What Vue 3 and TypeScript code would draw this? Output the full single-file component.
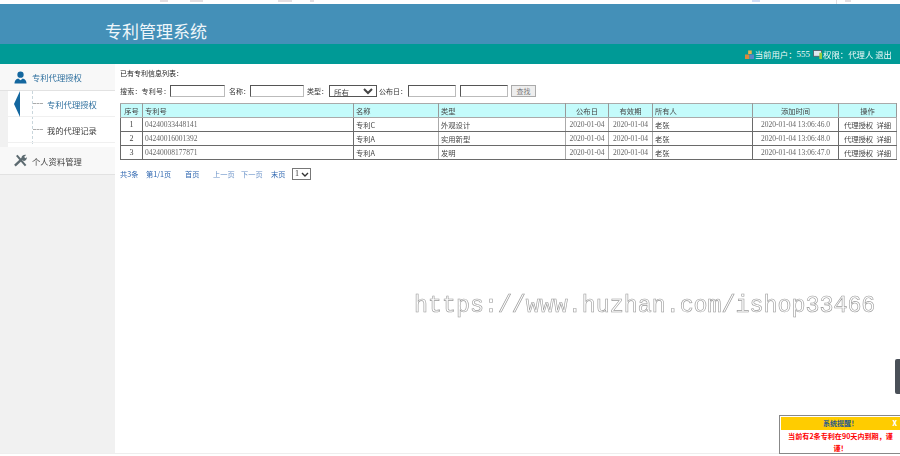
<script setup lang="ts">
interface Row { no: number; code: string; name: string; kind: string; pub: string; exp: string; owner: string; added: string }
const rows: Row[] = [
  { no: 1, code: '04240033448141', name: '专利C', kind: '外观设计', pub: '2020-01-04', exp: '2020-01-04', owner: '老张', added: '2020-01-04 13:06:46.0' },
  { no: 2, code: '04240016001392', name: '专利A', kind: '实用新型', pub: '2020-01-04', exp: '2020-01-04', owner: '老张', added: '2020-01-04 13:06:48.0' },
  { no: 3, code: '04240008177871', name: '专利A', kind: '发明', pub: '2020-01-04', exp: '2020-01-04', owner: '老张', added: '2020-01-04 13:06:47.0' },
]
</script>

<template>
  <div class="page">
    <div class="topstrip">
      <i class="m1"></i><i class="m2"></i><i class="m3"></i><i class="m4"></i><i class="m5"></i><i class="m6"></i><i class="m7"></i>
    </div>
    <header class="banner"><h1>专利管理系统</h1></header>
    <div class="statusbar">
      <svg class="sicon" viewBox="0 0 10 10"><rect x="3.500" y="0.500" width="4" height="4" fill="#e8b04a"/><rect x="0" y="5" width="5" height="5" fill="#d98a3a"/><rect x="5" y="5" width="5" height="5" fill="#5a86c4"/></svg>
      <span>当前用户：</span><span class="n555">555</span>
      <svg class="sicon s2" viewBox="0 0 10 10"><rect x="0.500" y="0.500" width="9" height="6.500" fill="#dfe8ee" stroke="#50606c" stroke-width="1"/><rect x="7" y="3" width="3" height="7" fill="#9c4"/></svg>
      <span>权限：代理人 退出</span>
    </div>
    <div class="body">
      <aside class="side">
        <div class="group active-group">
          <svg class="gicon" viewBox="0 0 14 14"><circle cx="7" cy="4" r="3.400" fill="#14679f"/><path d="M0.500 13.500c0-2.500 1-4.500 4-5.500l2.500 2 2.500-2c3 1 4 3 4 5.500z" fill="#14679f"/></svg>
          <span>专利代理授权</span>
        </div>
        <div class="submenu">
          <div class="subitem current"><span class="arrow"></span><i class="dash"></i><span>专利代理授权</span></div>
          <div class="subitem"><i class="dash"></i><span>我的代理记录</span></div>
        </div>
        <div class="group second-group">
          <svg class="gicon" viewBox="0 0 14 14"><path d="M3 1.500l9.500 11" stroke="#5c6a70" stroke-width="2.200" fill="none"/><path d="M1 12.500L9 5" stroke="#5c6a70" stroke-width="2.600" fill="none"/><path d="M8 4.500c0-2 2-4 5-3.500l-2 2 1 1.500 1.800-1c.4 2.500-2 4.500-4 3.800z" fill="#5c6a70"/></svg>
          <span>个人资料管理</span>
        </div>
      </aside>
      <main class="main">
        <div class="caption">已有专利信息列表：</div>
        <form class="search" @submit.prevent>
          <span class="l-code">搜索：专利号：</span><input class="i-code" />
          <span class="l-name">名称：</span><input class="i-name" />
          <span class="l-kind">类型：</span><select class="kind"><option>所有</option></select>
          <span class="l-pub">公布日：</span><input class="i-date" /><input class="i-date second" />
          <button class="go">查找</button>
        </form>
        <table class="grid">
          <colgroup>
            <col class="c1" /><col class="c2" /><col class="c3" /><col class="c4" />
            <col class="c5" /><col class="c6" /><col class="c7" /><col class="c8" /><col class="c9" />
          </colgroup>
          <thead>
            <tr>
              <th class="c">序号</th><th>专利号</th><th>名称</th><th>类型</th><th class="c">公布日</th><th class="c">有效期</th><th>所有人</th><th class="c">添加时间</th><th class="c">操作</th>
            </tr>
          </thead>
          <tbody>
            <tr v-for="r in rows" :key="r.no">
              <td class="c no">{{ r.no }}</td>
              <td class="num">{{ r.code }}</td>
              <td class="soft">{{ r.name }}</td>
              <td class="soft">{{ r.kind }}</td>
              <td class="c num soft">{{ r.pub }}</td>
              <td class="c num soft">{{ r.exp }}</td>
              <td>{{ r.owner }}</td>
              <td class="c num">{{ r.added }}</td>
              <td class="c soft">代理授权&nbsp;&nbsp;详细</td>
            </tr>
          </tbody>
        </table>
        <div class="pager">
          <span class="p1">共3条</span><span class="p2">第1/1页</span><span class="p3">首页</span><span class="p4 dim">上一页</span><span class="p5 dim">下一页</span><span class="p6">末页</span>
          <select class="pagesel"><option>1</option></select>
        </div>
      </main>
    </div>
    <div class="watermark">https://www.huzhan.com/ishop33466</div>
    <div class="edge"></div>
    <div class="notice">
      <div class="notice-head"><span>系统提醒！</span><b>X</b></div>
      <div class="notice-body">当前有2条专利在90天内到期，谨谨！</div>
    </div>
  </div>
</template>

<style>
html, body { margin: 0; background: #fff; overflow: hidden; }
</style>

<style scoped>
.page { position: relative; width: 900px; height: 456px; overflow: hidden; box-sizing: border-box; font-family: "Noto Sans CJK SC", sans-serif; font-size: 7px; color: #333; filter: blur(0.3px); }
.topstrip { height: 4px; display: flex; }
.topstrip i { height: 2px; background: #e4dee1; display: block; }
.m1 { width: 8px; margin-left: 160px; }
.m2 { width: 13px; margin-left: 22px; }
.m3 { width: 14px; margin-left: 75px; }
.m4 { width: 4px; margin-left: 18px; }
.m5 { width: 8px; margin-left: 438px; background: #d2def6 !important; }
.m6 { width: 1px; margin-left: 76px; height: 4px !important; }
.m7 { width: 6px; margin-left: 8px; }
.banner { height: 40px; background: #4490b8; box-sizing: border-box; padding: 16px 0 0 105px; }
.banner h1 { margin: 0; font-size: 17px; line-height: 22px; font-weight: 400; color: #eef6fa; }
.statusbar { height: 20px; background: #009a96; color: #f2fbfa; display: flex; justify-content: flex-end; align-items: center; padding-right: 8px; font-size: 8.400px; }
.sicon { width: 9px; height: 9px; margin-right: 1px; }
.n555 { font-family: "Liberation Serif", serif; font-size: 9px; }
.s2 { margin-left: 3px; }
.body { display: flex; height: 389px; border-bottom: 1px solid #eee; }
.side { width: 115px; flex: none; background: #f1f1f1; }
.group { height: 26px; background: #f8f8f8; border-bottom: 1px solid #e2e2e2; display: flex; align-items: center; gap: 5px; padding-left: 14px; font-size: 8.300px; color: #444; }
.second-group { height: 27px; }
.active-group { color: #2e6f9e; }
.gicon { width: 13px; height: 13px; flex: none; }
.submenu { background: #fff; margin-left: 8px; height: 56px; position: relative; }
.submenu::before { content: ""; position: absolute; left: 24px; top: 0; bottom: 3px; border-left: 1px dashed #c9d6dc; }
.subitem { height: 25px; display: flex; align-items: center; border-bottom: 1px solid #f0f0f0; padding-left: 25px; font-size: 8.300px; color: #444; position: relative; }
.subitem.current { color: #2e6f9e; }
.dash { width: 10px; border-top: 1px dashed #aaa; margin-right: 4px; }
.arrow { position: absolute; left: 6px; top: 0; width: 0; height: 0; border-top: 13px solid transparent; border-bottom: 13px solid transparent; border-right: 6px solid #14679f; }
.main { flex: 1; padding: 4px 4px 0 5px; min-width: 0; }
.caption { line-height: 10px; height: 10px; color: #222; }
.search { display: flex; align-items: center; height: 14px; margin-top: 6px; color: #333; white-space: nowrap; }
.search input { box-sizing: border-box; border: 1px solid #666; border-color: #555 #bbb #bbb #555; padding: 0; margin: 0; background: #fff; height: 12px; flex: none; }
.l-code { width: 49px; letter-spacing: 0.200px; }
.i-code { width: 55px; margin-left: 1px !important; }
.l-name { margin-left: 4px; width: 21px; }
.i-name { width: 54px; }
.l-kind { margin-left: 3px; width: 21px; }
.l-pub { margin-left: 2px; width: 29px; }
.i-date { width: 48px; }
.second { margin-left: 4px !important; }
.kind { width: 48px; height: 12px; margin-left: 1px; font-size: 7.500px; line-height: 10px; padding: 0; font-family: "Noto Sans CJK SC", sans-serif; color: #444; background: #fff; border: 1px solid #555; }
.go { width: 25px; height: 12px; margin-left: 3px; padding: 0; font-size: 7px; line-height: 10px; border: 1px solid #aaa; background: #eee; color: #777; font-family: "Noto Sans CJK SC", sans-serif; }
.grid { width: 776px; table-layout: fixed; border-collapse: collapse; margin-top: 5px; border: 1px solid #777; border-top-color: #bbb; }
.c1 { width: 22px; } .c2 { width: 211px; } .c3 { width: 85px; } .c4 { width: 127px; } .c5 { width: 43px; } .c6 { width: 44px; } .c7 { width: 100px; } .c8 { width: 86px; } .c9 { width: 58px; }
.grid th, .grid td { border: 1px solid #6a6a6a; height: 13px; padding: 0 2px; font-weight: 400; text-align: left; font-size: 7.300px; line-height: 12px; white-space: nowrap; overflow: hidden; color: #444; }
.grid th { background: #c4fbfb; border-color: #aaa #999; }
.grid td.soft { border-left-color: #aaa; border-right-color: #aaa; }
.grid .c { text-align: center; }
.grid td.num { font-family: "Liberation Serif", serif; color: #666; font-size: 7.500px; }
.grid td.no { font-family: "Liberation Serif", serif; font-size: 8px; color: #444; }
.pager { display: flex; align-items: center; height: 14px; margin-top: 7px; color: #2f67b0; white-space: nowrap; font-size: 7.200px; }
.pager .dim { color: #6a92c8; }
.p1 { width: 26px; } .p2 { width: 39px; } .p3 { width: 28px; } .p4 { width: 28px; } .p5 { width: 30px; } .p6 { width: 21px; }
.pagesel { appearance: none; width: 19px; height: 12px; box-sizing: border-box; font-size: 8px; line-height: 10px; padding: 0 0 0 2px; margin: 0; border: 1px solid #777; color: #333; font-family: "Liberation Serif", serif; background: #fff url("data:image/svg+xml,%3Csvg xmlns='http://www.w3.org/2000/svg' width='8' height='5'%3E%3Cpath d='M1 1l3 3 3-3' fill='none' stroke='%23333' stroke-width='1.400'/%3E%3C/svg%3E") no-repeat right 1px center; }
.watermark { position: absolute; left: 414px; top: 292px; font-family: "Liberation Mono", monospace; font-size: 23.300px; line-height: 28px; color: #fff; -webkit-text-stroke: 0.600px #999; white-space: nowrap; }
.edge { position: absolute; right: 0; top: 359px; width: 5px; height: 35px; background: #4a5058; border-radius: 2px 0 0 2px; }
.notice { position: absolute; left: 779px; top: 415px; width: 121px; height: 39px; box-sizing: border-box; border: 1px solid #888; border-right: none; background: #fff; padding: 1px 0 0 1px; }
.notice-head { height: 13px; background: #ffcc00; position: relative; text-align: center; color: #2a5a8a; font-size: 7px; line-height: 13px; font-weight: 700; }
.notice-head b { position: absolute; right: 3px; top: 0; color: #fff; }
.notice-body { color: #f00; font-size: 7.100px; line-height: 12px; font-weight: 700; text-align: center; padding: 0 3px; }
</style>
